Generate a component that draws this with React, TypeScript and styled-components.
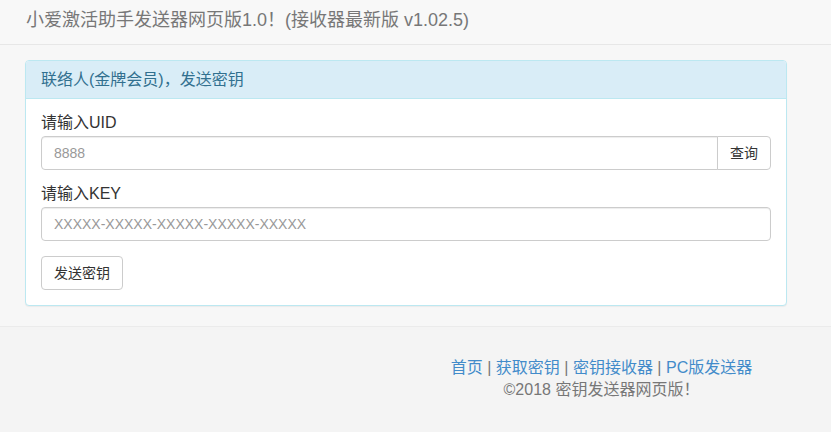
import styled, { createGlobalStyle } from "styled-components";

const GlobalStyle = createGlobalStyle`
  html, body {
    margin: 0;
    padding: 0;
    background: #f7f7f7;
  }
  body {
    font-family: "Liberation Sans", "Noto Sans CJK SC", sans-serif;
    font-size: 14px;
    color: #333;
  }
  * {
    box-sizing: border-box;
  }
`;

const Page = styled.div`
  min-height: 432px;
  display: flex;
  flex-direction: column;
  background: #f7f7f7;
`;

const Navbar = styled.header`
  height: 45px;
  background: #f8f8f8;
  border-bottom: 1px solid #e7e7e7;
`;

const Brand = styled.div`
  padding: 10px 0 0 26px;
  font-size: 18px;
  line-height: 20px;
  color: #777;
  white-space: nowrap;
`;

const Main = styled.main`
  padding: 15px 0 20px 25px;
`;

const Panel = styled.section`
  width: 762px;
  background: #fff;
  border: 1px solid #bce8f1;
  border-radius: 4px;
  box-shadow: 0 1px 1px rgba(0, 0, 0, 0.05);
  overflow: hidden;
`;

const PanelHeading = styled.div`
  padding: 10px 15px;
  background: #d9edf7;
  border-bottom: 1px solid #bce8f1;
  color: #31708f;
  font-size: 16px;
  line-height: 17px;
`;

const PanelBody = styled.div`
  padding: 15px;
  display: flex;
  flex-direction: column;
  align-items: flex-start;
`;

const FormGroup = styled.div`
  width: 100%;
  margin-bottom: 15px;
`;

const Label = styled.label`
  display: block;
  font-size: 16px;
  line-height: 17px;
  margin-bottom: 5px;
  color: #333;
`;

const InputGroup = styled.div`
  display: flex;
  width: 100%;
`;

const TextInput = styled.input<{ $joined?: boolean }>`
  flex: 1;
  width: 100%;
  height: 34px;
  padding: 6px 12px;
  font-family: inherit;
  font-size: 14px;
  color: #555;
  background: #fff;
  border: 1px solid #ccc;
  border-radius: ${(p) => (p.$joined ? "4px 0 0 4px" : "4px")};
  box-shadow: inset 0 1px 1px rgba(0, 0, 0, 0.075);
  outline: none;
  &::placeholder {
    color: #999;
  }
`;

const Button = styled.button<{ $joined?: boolean }>`
  height: 34px;
  padding: 6px 12px;
  font-family: inherit;
  font-size: 14px;
  line-height: 20px;
  color: #333;
  background: #fff;
  border: 1px solid #ccc;
  border-radius: ${(p) => (p.$joined ? "0 4px 4px 0" : "4px")};
  margin-left: ${(p) => (p.$joined ? "-1px" : "0")};
  cursor: pointer;
`;

const Footer = styled.footer`
  flex: 1;
  background: #f4f4f4;
  border-top: 1px solid #ebebeb;
  padding-top: 30px;
`;

const FooterRow = styled.div`
  width: 762px;
  margin-left: 25px;
  display: grid;
  grid-template-columns: 1fr 1fr;
`;

const FooterCol = styled.div`
  grid-column: 2;
  padding-left: 10px;
  text-align: center;
  font-size: 16px;
  line-height: 22px;
  color: #777;
`;

const Links = styled.div`
  a {
    color: #428bca;
    text-decoration: none;
  }
`;

const links = ["首页", "获取密钥", "密钥接收器", "PC版发送器"];

export default function App() {
  return (
    <Page>
      <GlobalStyle />
      <Navbar>
        <Brand>小爱激活助手发送器网页版1.0！(接收器最新版 v1.02.5)</Brand>
      </Navbar>
      <Main>
        <Panel>
          <PanelHeading>联络人(金牌会员)，发送密钥</PanelHeading>
          <PanelBody>
            <FormGroup>
              <Label>请输入UID</Label>
              <InputGroup>
                <TextInput $joined placeholder="8888" />
                <Button $joined>查询</Button>
              </InputGroup>
            </FormGroup>
            <FormGroup>
              <Label>请输入KEY</Label>
              <TextInput placeholder="XXXXX-XXXXX-XXXXX-XXXXX-XXXXX" />
            </FormGroup>
            <Button>发送密钥</Button>
          </PanelBody>
        </Panel>
      </Main>
      <Footer>
        <FooterRow>
          <FooterCol>
            <Links>
              {links.map((l, i) => (
                <span key={l}>
                  {i > 0 && " | "}
                  <a href="#">{l}</a>
                </span>
              ))}
            </Links>
            <div>©2018 密钥发送器网页版！</div>
          </FooterCol>
        </FooterRow>
      </Footer>
    </Page>
  );
}
